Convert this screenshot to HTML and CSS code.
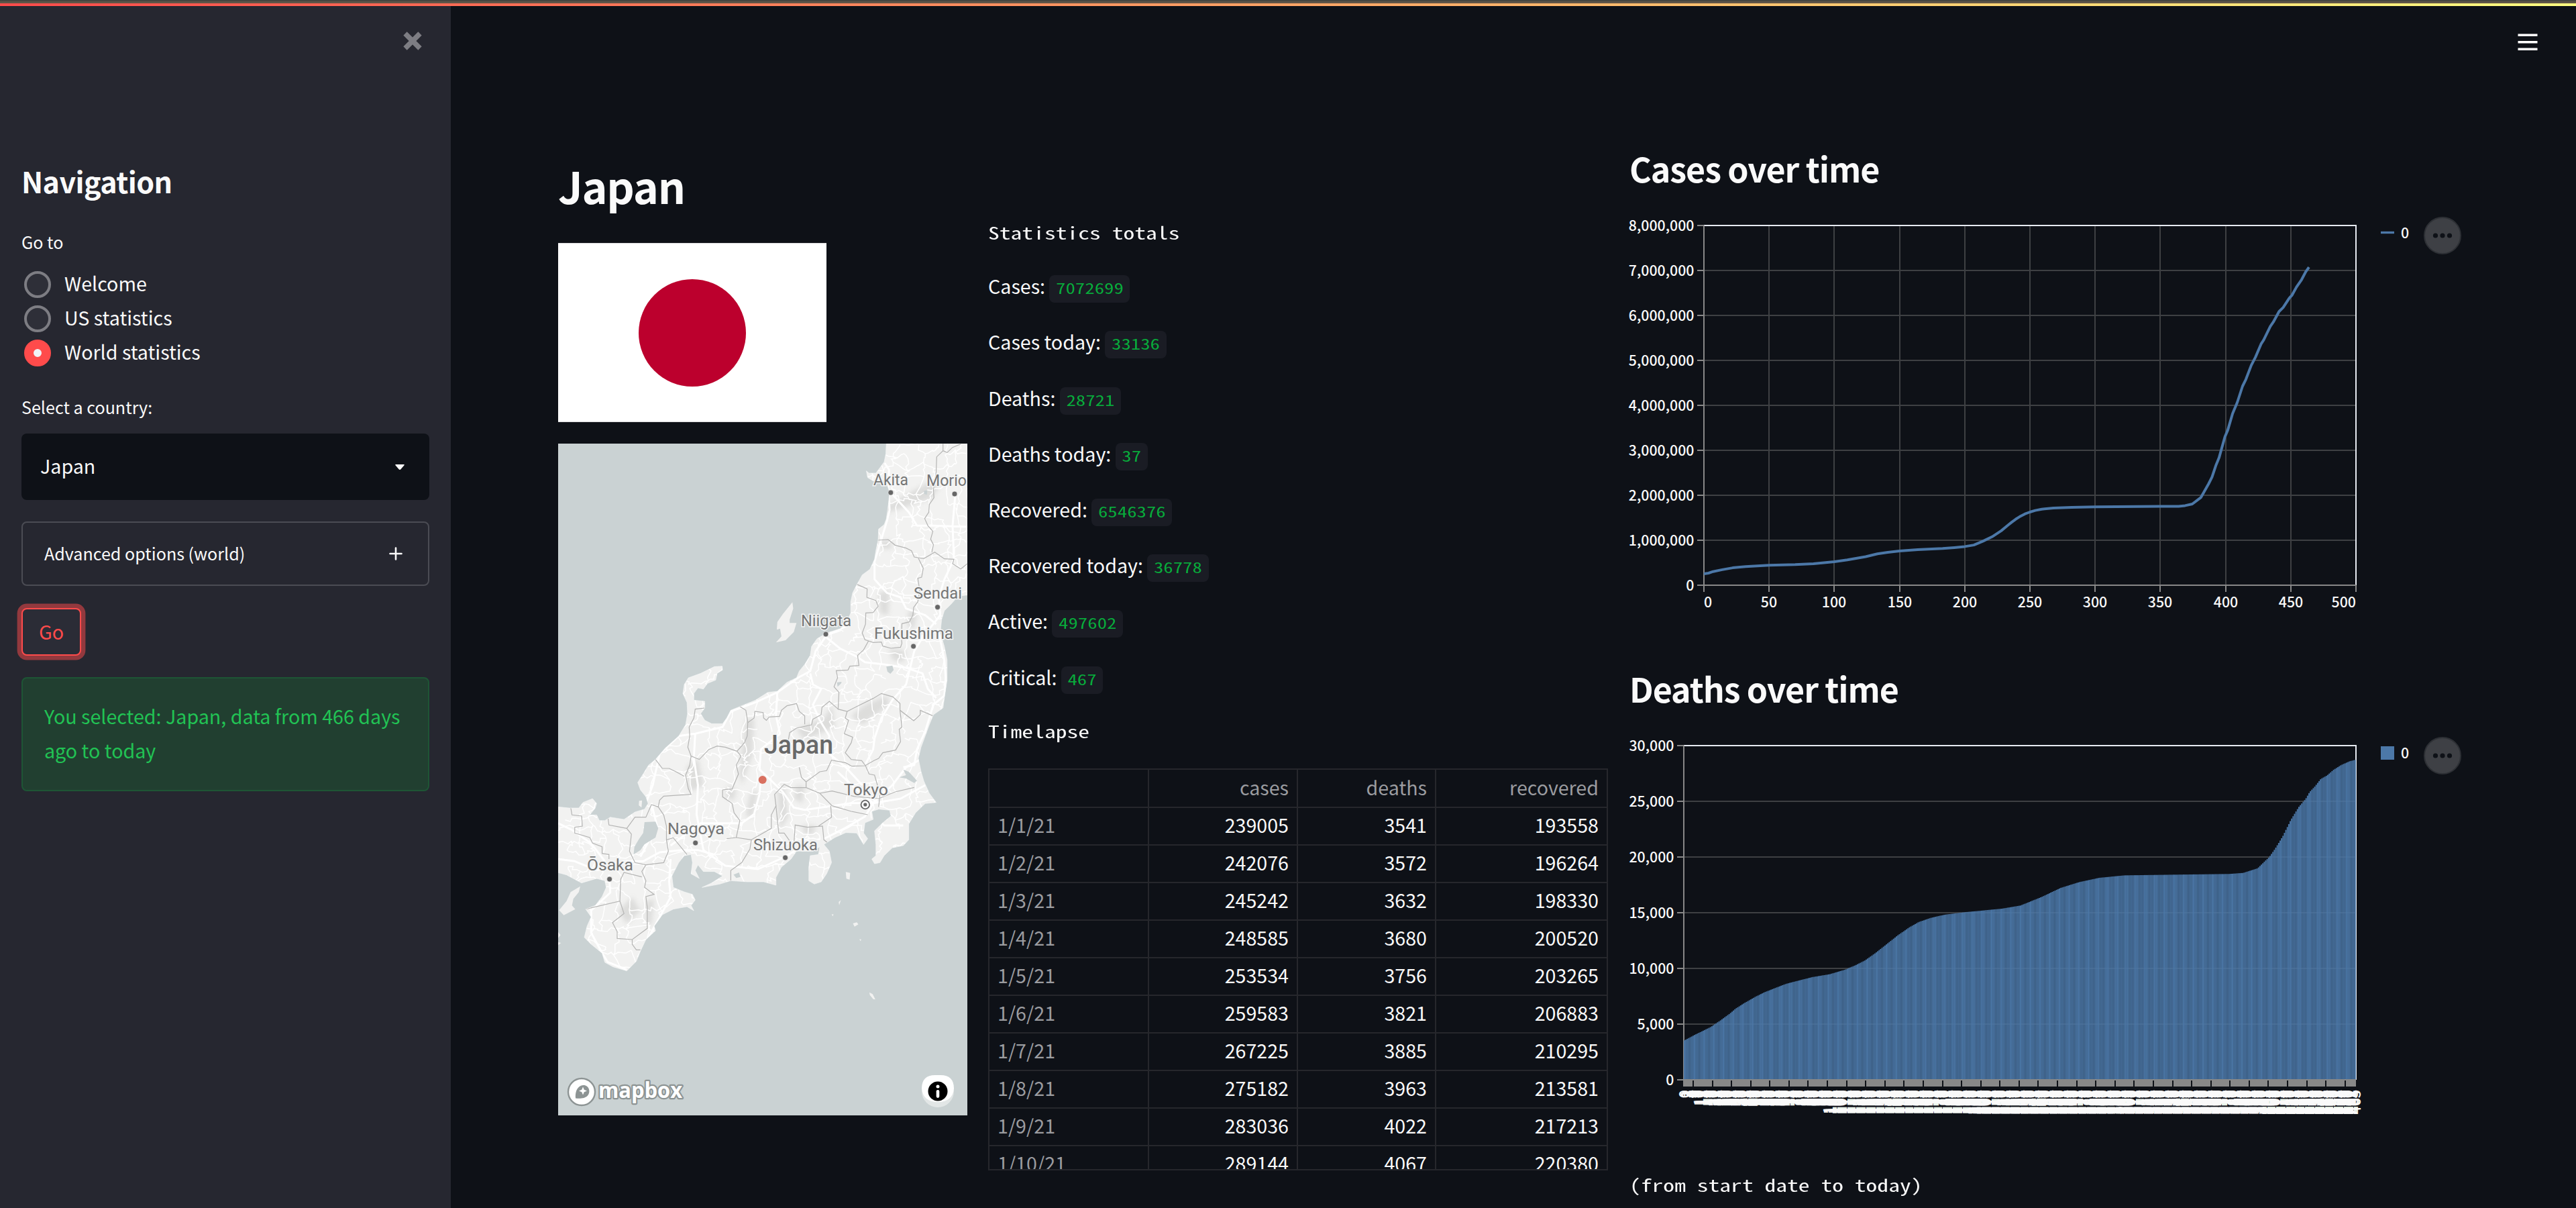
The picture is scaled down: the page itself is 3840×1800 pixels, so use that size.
FILE: index.html
```html
<!DOCTYPE html>
<html lang="en">
<head>
<meta charset="utf-8">
<title>Covid statistics</title>
<link rel="stylesheet" href="styles.css">
</head>
<body>
<div class="app">
  <div class="decoration"></div>
  <aside class="sidebar">
    <div class="sidebar-head">
      <svg class="close" width="28" height="28" viewBox="0 0 28 28"><path d="M3 3 25 25M25 3 3 25" stroke="#7d7d83" stroke-width="7.5"/></svg>
    </div>
    <h2 class="nav-title">Navigation</h2>
    <div class="label goto">Go to</div>
    <div class="radios">
      <label class="radio"><span class="dot"></span><span class="radio-text">Welcome</span></label>
      <label class="radio"><span class="dot"></span><span class="radio-text">US statistics</span></label>
      <label class="radio"><span class="dot checked"></span><span class="radio-text">World statistics</span></label>
    </div>
    <div class="label country">Select a country:</div>
    <div class="select"><span>Japan</span><svg width="14" height="8" viewBox="0 0 14 8"><path d="M1.2 0H12.8Q14.6 0 13.3 1.5L8.4 7.2Q7 8.6 5.6 7.2L.7 1.5Q-.6 0 1.2 0Z" fill="#fafafa"/></svg></div>
    <div class="expander"><span>Advanced options (world)</span><svg width="20" height="20" viewBox="0 0 20 20"><path d="M10 1.5V18.5M1.5 10H18.5" stroke="#fafafa" stroke-width="2.6" stroke-linecap="round"/></svg></div>
    <button class="go">Go</button>
    <div class="alert">You selected: Japan, data from 466 days ago to today</div>
  </aside>
  <main class="main">
    <div class="toolbar">
      <svg width="30" height="26" viewBox="0 0 30 26"><path d="M.5 2.2H29.5M.5 12.8H29.5M.5 23.2H29.5" stroke="#fff" stroke-width="3.6"/></svg>
    </div>
    <div class="columns">
      <section class="col-map">
        <h1>Japan</h1>
        <div class="flag"><div class="sun"></div></div>
        <svg class="map" width="610" height="1001" viewBox="0 0 610 1001">
          <defs>
            <path id="honshu" d="M1228 33 1226 80 1220 115 1205 140 1190 165 1165 165 1155 155 1160 185 1180 200 1215 195 1232 220 1240 250 1236 300 1228 370 1220 395 1200 415 1198 465 1190 510 1185 550 1168 595 1140 620 1122 660 1105 700 1098 740 1098 790 1080 840 1060 860 1010 880 975 905 955 940 950 980 930 1020 910 1050 900 1080 865 1100 830 1140 795 1145 750 1180 690 1210 660 1225 645 1260 630 1285 590 1285 565 1270 550 1240 565 1215 565 1185 525 1180 525 1150 540 1125 560 1130 575 1105 605 1090 610 1060 630 1045 628 1028 600 1030 550 1060 505 1080 490 1110 485 1150 500 1190 502 1240 495 1290 470 1340 420 1395 385 1445 360 1470 340 1510 320 1548 330 1581 350 1612 358 1642 345 1667 310 1680 270 1713 220 1703 200 1718 180 1718 170 1693 145 1693 165 1662 170 1642 155 1620 120 1637 105 1662 70 1662 29 1657 29 1951 60 1961 115 1997 170 1977 200 1987 205 2017 190 2058 165 2098 130 2114 150 2149 135 2190 125 2240 150 2271 190 2311 200 2352 230 2372 280 2390 315 2347 330 2301 350 2250 385 2210 380 2190 410 2139 450 2114 500 2103 525 2121 515 2098 530 2073 520 2048 490 2037 450 2017 445 1966 470 1906 490 1875 515 1870 520 1906 515 1956 545 1977 530 1941 540 1916 560 1946 600 1946 630 1966 590 1997 555 2017 620 2002 660 1987 720 1992 780 1992 825 2007 825 1972 845 1926 880 1890 900 1855 960 1855 985 1835 980 1870 950 1875 945 1926 945 1987 965 2002 990 1992 1010 1956 1028 1906 1020 1855 1000 1825 1040 1794 1080 1772 1120 1774 1145 1825 1160 1799 1145 1774 1150 1728 1180 1713 1175 1677 1200 1667 1240 1672 1245 1698 1215 1728 1185 1764 1190 1825 1190 1875 1175 1890 1185 1911 1205 1906 1220 1875 1250 1840 1290 1830 1310 1804 1310 1733 1335 1683 1370 1642 1410 1637 1385 1596 1365 1541 1355 1500 1345 1440 1355 1390 1370 1340 1385 1290 1400 1245 1435 1215 1440 1170 1450 1090 1450 1000 1440 940 1425 880 1430 820 1440 780 1465 750 1490 715 1524 710 1524 33Z"/>
            <clipPath id="land-clip"><use href="#honshu"/></clipPath>
            <filter id="soft" x="-30%" y="-30%" width="160%" height="160%"><feGaussianBlur stdDeviation="9"/></filter>
          </defs>
          <rect width="610" height="1001" fill="#cad2d3"/>
          <g transform="scale(.40816 .33333) translate(-29.4 -33)">
            <use href="#honshu" fill="#f2f2f1"/>
            <g clip-path="url(#land-clip)">
              <g filter="url(#soft)" fill="#cfcfcd" opacity=".6">
                <path d="M715 1270 745 1260 740 1420 700 1560 690 1500Z"/><path d="M830 1590 855 1560 870 1700 840 1760Z"/>
                <path d="M900 1560 930 1570 920 1640 890 1620Z"/><path d="M1200 470 1240 465 1250 500 1215 505Z"/>
                <path d="M1200 700 1240 690 1235 800 1205 790Z"/><path d="M1240 950 1300 960 1290 1010 1250 1000Z"/>
                <path d="M1100 1250 1150 1200 1230 1160 1240 1200 1140 1290Z"/><path d="M900 1310 1000 1260 1030 1200 1040 1300 930 1360Z"/>
                <path d="M500 1480 540 1440 560 1560 510 1590Z"/><path d="M730 1600 760 1580 740 1700 715 1700Z"/>
                <path d="M650 1560 680 1580 670 1630 640 1610Z"/><path d="M350 2080 380 2070 370 2180 350 2190Z"/>
                <path d="M920 1740 970 1740 960 1780 930 1780Z"/><path d="M1130 380 1390 200 1420 230 1390 280Z"/>
                <path d="M1310 780 1340 780 1330 860 1305 850Z"/><path d="M250 2120 300 2060 330 2120 280 2180Z"/>
              </g>
              <g id="roads" class="roads"></g>
              <g class="highways">
                <path d="M1222 120 1238 150 1235 240 1265 280 1310 340 1340 400 1400 400 1524 405M1480 260 1470 400 1475 550 1440 640 1420 720 1425 800 1360 900 1330 960 1310 1060 1300 1110 1250 1180 1210 1260 1185 1350 1180 1400 1150 1470"/>
                <path d="M1236 250 1240 330 1230 380 1200 500 1185 560 1185 640 1230 700 1280 720 1300 770 1370 800 1410 840M1420 880 1440 1000 1445 1080 1440 1160 1400 1200 1370 1320 1340 1400 1330 1470 1290 1480"/>
                <path d="M1098 840 1010 890 970 960 950 1050 905 1080 830 1145 750 1190 660 1230 630 1300 530 1330 470 1340 400 1420 375 1560 350 1640"/>
                <path d="M1010 900 1060 950 1120 985 1150 1010 1220 1020 1300 1035 1360 1060 1380 1130 1410 1170M950 1060 960 1110 990 1130 960 1200 985 1270 1020 1340 1010 1410 1080 1480 1140 1560"/>
                <path d="M830 1145 825 1250 840 1330 770 1400 765 1490 800 1530 850 1590 890 1660 930 1670 1100 1640 1180 1640M770 1520 765 1600 745 1690 700 1730 550 1730 440 1830"/>
                <path d="M530 1330 525 1440 540 1560 535 1690 560 1850 640 1920 760 1935 840 1890 900 1850M1000 1800 1080 1750 1150 1700 1180 1640 1280 1620 1370 1560M1180 1690 1220 1740 1290 1740"/>
                <path d="M29 1890 90 1900 170 1940 220 1930 270 1900 340 1900 400 1860 480 1850 540 1850 600 1870M440 1890 435 1990 440 2060 400 2150 320 2330M215 1960 220 2040 150 2120 150 2220 190 2310 210 2350 280 2385M29 1730 80 1760 150 1820 200 1900"/>
                <path d="M1180 1640 1250 1560 1300 1480 1360 1440M1180 1640 1120 1580 1050 1500M370 1640 390 1740 330 1880"/>
              </g>
              <g class="borders">
                <path d="M1435 33 1435 65 1412 92 1410 160 1400 240 1402 275 1385 305 1383 340 1368 368 1380 400 1398 425 1390 460 1400 485 1394 520M1500 35 1470 50 1450 73 1435 65"/>
                <path d="M1193 465 1235 462 1260 487 1300 500 1320 512 1330 540 1365 547 1405 518 1440 548 1475 550 1470 570 1500 593 1524 570"/>
                <path d="M1345 545 1363 590 1357 630 1343 635 1350 690 1343 740 1328 765 1325 800 1312 830 1285 838 1283 905"/>
                <path d="M1120 662 1158 682 1157 720 1190 735 1198 760 1180 788 1153 790 1152 840 1140 880 1150 910 1180 922 1210 920 1215 938 1245 948 1280 943 1285 925 1283 905"/>
                <path d="M1163 915 1145 955 1123 980 1128 1025 1095 1028 1088 1045 1045 1048 1050 1080 1037 1120 1055 1145 1052 1220 1085 1230 1120 1208 1180 1172 1210 1150 1252 1165 1278 1195 1278 1225 1328 1272 1352 1245 1352 1225 1398 1250"/>
                <path d="M1278 1225 1285 1300 1275 1310 1280 1365 1262 1403 1215 1415 1200 1440 1183 1450 1150 1473 1102 1475 1080 1460 1028 1448 1010 1495 985 1500 935 1545 918 1525 910 1480"/>
                <path d="M1085 1230 1078 1260 1090 1270 1075 1330 1105 1345 1100 1370 1078 1415 1100 1445 1138 1450 1152 1473 1165 1510 1185 1515 1205 1600 1200 1657"/>
                <path d="M1052 1220 1020 1185 993 1212 990 1245 960 1265 955 1290 900 1305 875 1325 870 1360"/>
                <path d="M693 1208 715 1225 722 1280 745 1260 748 1230 778 1235 780 1260 790 1270 800 1255 838 1252 845 1225 865 1205 900 1195 910 1230 930 1250 930 1288"/>
                <path d="M722 1280 720 1340 710 1370 683 1408 697 1430 680 1470 688 1510 665 1576 630 1581 630 1612 665 1642 672 1683 693 1718 680 1794 645 1799"/>
                <path d="M565 1215 530 1220 525 1260 508 1300 510 1340 503 1390 515 1430 545 1445 580 1400 610 1385 640 1390 683 1408"/>
                <path d="M515 1430 510 1470 495 1515 505 1576 515 1601 415 1609 400 1627 395 1657 415 1693 425 1743 425 1804 432 1855 415 1906 350 1916M385 1445 410 1485 435 1485 460 1500 490 1520"/>
                <path d="M935 1545 935 1571 985 1596 1030 1652 1100 1677 1160 1692M985 1596 1030 1586 1110 1610 1200 1620 1260 1590 1330 1570M935 1571 880 1571 855 1556 820 1601 825 1652 808 1693 808 1753 735 1804 730 1845 700 1906 660 1941 660 1987"/>
                <path d="M825 1652 835 1774 855 1774 890 1835 895 1738 940 1748 995 1743 1000 1804 1025 1829M1025 1652 1028 1703 980 1743M680 1794 735 1804"/>
                <path d="M75 1657 80 1693 115 1698 118 1743 90 1748 90 1774 145 1794 155 1819 190 1835 190 1865 215 1870 215 1890M210 1693 215 1738 280 1753 297 1779 290 1855 310 1906 350 1916 335 1946 350 1987 345 2017 380 2048 350 2058 355 2108 355 2200 300 2250 245 2245 245 2215 228 2174 270 2134 255 2078 130 2114"/>
                <path d="M300 2250 300 2271 315 2296 330 2296M280 1753 310 1703 350 1703 370 1647 395 1657M425 1804 450 1795 500 1870M255 2078 258 1980 270 1950 335 1970"/>
              </g>
              <g fill="#cad2d3">
                <path d="M345 1725 385 1723 395 1753 385 1794 345 1824 330 1850 305 1870 308 1835 325 1800 340 1774Z"/>
                <path d="M1228 1030 1250 1025 1255 1045 1243 1062 1232 1052Z"/><path d="M1365 245 1378 240 1376 262 1366 258Z"/>
                <path d="M1290 1490 1310 1500 1340 1540 1330 1550 1300 1530 1275 1525 1300 1515Z"/><path d="M1048 1100 1065 1098 1062 1106 1050 1120Z"/>
                <path d="M670 1960 690 1950 695 1970 680 1975Z"/>
              </g>
            </g>
            <use href="#honshu" class="coast"/>
            <g fill="#f2f2f1">
              <path d="M885 742 888 770 875 820 875 835 900 835 890 875 860 912 825 922 845 895 840 860 828 865 830 830 850 795Z"/>
              <path d="M110 2012 105 2038 85 2068 80 2098 92 2114 50 2141 33 2119 60 2078 75 2038Z"/>
              <path d="M1080 1948 1096 1952 1094 1982 1082 1978ZM1062 2074 1056 2096 1054 2082ZM1028 2138 1035 2136 1033 2146ZM1106 2178 1120 2173 1126 2182 1112 2192ZM1130 2248 1137 2250 1133 2257ZM1166 2486 1178 2494 1188 2518 1180 2516 1168 2498ZM29 2216 38 2230 29 2244ZM29 2262 40 2265 29 2275ZM325 1630 336 1628 334 1660 324 1650Z"/>
            </g>
          </g>
          <g class="city-dots">
            <circle cx="495.8" cy="73" r="4"/><circle cx="591" cy="75" r="4"/><circle cx="565.6" cy="243.7" r="4"/><circle cx="399" cy="284" r="4"/>
            <circle cx="529.6" cy="302" r="4"/><circle cx="204.7" cy="595" r="4"/><circle cx="338.6" cy="617" r="4"/><circle cx="76.6" cy="649" r="4"/>
            <circle cx="457.8" cy="538" r="6.3" class="ring"/><circle cx="457.8" cy="538" r="3"/>
          </g>
          <circle cx="304.7" cy="501" r="6" fill="#d9705f"/>
          <g class="city-names">
            <text x="470" y="62" textLength="52" lengthAdjust="spacingAndGlyphs">Akita</text>
            <text x="549" y="63" textLength="60" lengthAdjust="spacingAndGlyphs">Morio</text>
            <text x="530" y="231" textLength="72" lengthAdjust="spacingAndGlyphs">Sendai</text>
            <text x="362" y="272" textLength="75" lengthAdjust="spacingAndGlyphs">Niigata</text>
            <text x="471" y="291" textLength="118" lengthAdjust="spacingAndGlyphs">Fukushima</text>
            <text x="307" y="462" textLength="103" lengthAdjust="spacingAndGlyphs" class="country-name">Japan</text>
            <text x="426" y="524" textLength="66" lengthAdjust="spacingAndGlyphs">Tokyo</text>
            <text x="163" y="582" textLength="85" lengthAdjust="spacingAndGlyphs">Nagoya</text>
            <text x="291" y="606" textLength="96" lengthAdjust="spacingAndGlyphs">Shizuoka</text>
            <text x="43" y="636" textLength="69" lengthAdjust="spacingAndGlyphs">Ōsaka</text>
          </g>
          <g>
            <circle cx="35" cy="966" r="20" fill="#fff" stroke="#8d9494" stroke-width="2.4"/>
            <path d="M26 975.5C25 960 33 956 38 956C46 956 49 966 44 971.5C40 976 33 976 26 975.5Z" fill="#8d9494"/>
            <path d="M37 958.5 38.8 962.7 43 964.5 38.8 966.3 37 970.5 35.2 966.3 31 964.5 35.2 962.7Z" fill="#fff"/>
            <text x="60" y="975" textLength="125" lengthAdjust="spacingAndGlyphs" class="wordmark">mapbox</text>
          </g>
          <g>
            <rect x="542" y="941" width="48" height="48" rx="24" fill="#e2e6e6"/>
            <path d="M542 961Q542 941 562 941H570Q590 941 590 961Q588 981 566 981Q544 981 542 961Z" fill="#fff"/>
            <circle cx="566" cy="965" r="14.5"/><circle cx="566" cy="958" r="2.5" fill="#fff"/>
            <path d="M566 965.2V972.6" stroke="#fff" stroke-width="4.6" stroke-linecap="round"/>
          </g>
        </svg>
      </section>
      <section class="col-stats">
        <div class="mono">Statistics totals</div>
        <div class="totals">
          <p>Cases: <code><span>7072699</span></code></p>
          <p>Cases today: <code><span>33136</span></code></p>
          <p>Deaths: <code><span>28721</span></code></p>
          <p>Deaths today: <code><span>37</span></code></p>
          <p>Recovered: <code><span>6546376</span></code></p>
          <p>Recovered today: <code><span>36778</span></code></p>
          <p>Active: <code><span>497602</span></code></p>
          <p>Critical: <code><span>467</span></code></p>
        </div>
        <div class="mono">Timelapse</div>
        <div class="table-box">
          <table>
            <colgroup><col class="c1"><col class="c2"><col class="c3"><col class="c4"></colgroup>
            <tr><th></th><th>cases</th><th>deaths</th><th>recovered</th></tr>
            <tr><th>1/1/21</th><td>239005</td><td>3541</td><td>193558</td></tr>
            <tr><th>1/2/21</th><td>242076</td><td>3572</td><td>196264</td></tr>
            <tr><th>1/3/21</th><td>245242</td><td>3632</td><td>198330</td></tr>
            <tr><th>1/4/21</th><td>248585</td><td>3680</td><td>200520</td></tr>
            <tr><th>1/5/21</th><td>253534</td><td>3756</td><td>203265</td></tr>
            <tr><th>1/6/21</th><td>259583</td><td>3821</td><td>206883</td></tr>
            <tr><th>1/7/21</th><td>267225</td><td>3885</td><td>210295</td></tr>
            <tr><th>1/8/21</th><td>275182</td><td>3963</td><td>213581</td></tr>
            <tr><th>1/9/21</th><td>283036</td><td>4022</td><td>217213</td></tr>
            <tr><th>1/10/21</th><td>289144</td><td>4067</td><td>220380</td></tr>
          </table>
        </div>
      </section>
      <section class="col-charts">
        <h2>Cases over time</h2>
        <svg id="cases" class="chart" width="1271" height="630" viewBox="0 0 1271 630"></svg>
        <h2 class="second">Deaths over time</h2>
        <svg id="deaths" class="chart" width="1271" height="610" viewBox="0 0 1271 610"></svg>
        <div class="mono caption">(from start date to today)</div>
      </section>
    </div>
  </main>
</div>
<script src="charts.js"></script>
</body>
</html>
```
FILE: styles.css
```css
* { box-sizing: border-box; }
body {
  margin: 0;
  background: #0e1117;
  color: #fafafa;
  font-family: "Noto Sans CJK JP", "Noto Sans", sans-serif;
  font-size: 28.65px;
}
h1, h2, p { margin: 0; font-weight: 700; }
p { font-weight: 400; }
svg { display: block; flex: none; }
.app { position: relative; display: flex; width: 3840px; height: 1800px; overflow: hidden; }
.decoration {
  position: absolute;
  inset: 0 0 auto 0;
  height: 9px;
  background:
    linear-gradient(#454640 0 2px, #5f5548 2px 5px, transparent 5px),
    linear-gradient(90deg, #ff4b4b, #fffd80);
}

.sidebar { width: 672px; flex: none; background: #262730; padding: 0 32px; display: flex; flex-direction: column; }
.sidebar-head { height: 240px; display: flex; justify-content: flex-end; padding: 47px 11px 0 0; }
.nav-title { font-size: 43px; line-height: 58px; letter-spacing: -.6px; }
.label { font-size: 25.1px; line-height: 42px; }
.goto { margin-top: 41px; }
.radios { margin-top: 17px; }
.radio { display: flex; align-items: center; gap: 20px; height: 51px; padding-left: 4px; }
.radio-text { line-height: 46px; padding-bottom: 3px; }
.dot { width: 40px; height: 40px; border-radius: 50%; border: 4px solid #7d7d83; background: #2e2f38; }
.dot.checked { border: 14px solid #ff4b4b; background: #f0f2f6; }
.country { margin-top: 34px; }
.select, .expander { display: flex; align-items: center; justify-content: space-between; border-radius: 8px; }
.select { margin-top: 19px; height: 99px; padding: 0 37px 0 28px; background: #0e1117; }
.select span { padding-bottom: 4px; }
.expander span { padding-bottom: 2px; }
.expander { margin-top: 32px; height: 96px; padding: 0 38px 0 32px; border: 2px solid #4b4c54; font-size: 25.1px; }
.go {
  margin-top: 33px; width: 89px; height: 71px; padding: 0 0 3px;
  background: #2b2c36; border: 2px solid #ff4b4b; border-radius: 8px;
  box-shadow: 0 0 0 6.4px rgba(255, 75, 75, .5);
  color: #ff4b4b; font: inherit;
}
.alert {
  margin-top: 32px; height: 170px; padding: 30px 30px 0 32px;
  background: #213f30; border: 2px solid #1e5535; border-radius: 8px;
  color: #21c354; line-height: 51.2px;
}

.main { flex: 1; padding-left: 160px; }
.toolbar { height: 216px; display: flex; justify-content: flex-end; padding: 50px 57px 0 0; }
.columns { display: grid; grid-template-columns: 610px 924px 1272px; column-gap: 31px; align-items: start; }

.col-map { padding-top: 17px; }
h1 { font-size: 64.5px; line-height: 86px; letter-spacing: -1.2px; }
.flag {
  width: 400px; height: 267px; margin: 43px 0 32px;
  display: flex; align-items: center; justify-content: center;
  background: #fff; border: solid #dcdcde; border-width: 1px 0;
}
.sun { width: 160px; height: 160px; border-radius: 50%; background: #bc002d; }
.roads path { fill: none; stroke: #fff; stroke-width: 1.5px; vector-effect: non-scaling-stroke; }
.highways path { fill: none; stroke: #fff; stroke-width: 3px; stroke-linejoin: round; vector-effect: non-scaling-stroke; }
.borders path { fill: none; stroke: #b5b5b4; stroke-width: 1.2px; vector-effect: non-scaling-stroke; }
.coast { fill: none; stroke: #f8f9f9; stroke-width: 1.5px; vector-effect: non-scaling-stroke; }
.city-dots circle { fill: #666; stroke: #fff; stroke-width: .6px; }
.city-dots .ring { fill: #fff; stroke: #666; stroke-width: 1.8px; }
.city-names text {
  font: 24.5px Roboto, sans-serif; fill: #757575;
  stroke: #f4f5f5; stroke-width: 3px; paint-order: stroke;
}
.city-names .country-name { font-size: 38px; fill: #686868; font-weight: 500; }
.wordmark {
  font: 700 32px "Open Sans", sans-serif; fill: #fff;
  stroke: #8d9494; stroke-width: 4.5px; stroke-linejoin: round; paint-order: stroke;
}

.col-stats { padding-top: 101px; }
.mono {
  font-family: "Noto Sans Mono CJK JP", "Liberation Mono", monospace; font-size: 33.6px; line-height: 51.2px;
  transform: scaleY(.77); transform-origin: 0 40px;
}
.totals { margin: 32px 0 26px; display: flex; flex-direction: column; gap: 32px; }
.totals p { line-height: 51.2px; height: 51.2px; }
code {
  display: inline-block; height: 41px; padding: 0 9.6px; border-radius: 8px;
  background: #1a1c24; color: #09ab3b;
  font: 28.8px/32.5px "Noto Sans Mono CJK JP", "Liberation Mono", monospace;
}
code span { display: inline-block; transform: scaleY(.77); transform-origin: 0 28.8px; }
.table-box { margin-top: 34px; height: 599px; overflow: hidden; border: 2px solid #26272c; }
table { width: 920px; table-layout: fixed; border-collapse: collapse; }
.c1 { width: 237px; }
.c2 { width: 222px; }
.c3 { width: 206px; }
th, td {
  height: 56px; padding: 0 12px 3px 12px; line-height: 50px; font-weight: 400; text-align: right; white-space: nowrap;
  border-right: 2px solid #26272c; border-bottom: 2px solid #26272c;
}
th { color: #9b9ca0; }
th:first-child { text-align: left; }
th:last-child, td:last-child { border-right: 0; }

.col-charts { padding-left: 1px; }
.col-charts h2 { font-size: 50.1px; line-height: 68px; letter-spacing: -1.05px; }
.chart { margin-top: 16px; overflow: visible; }
.col-charts .second { margin-top: 61px; }
#deaths { margin-top: 21px; }
.caption { margin-top: 46px; }
.chart text { font: 500 21.3px "Noto Sans CJK JP", sans-serif; fill: #fafafa; }
```
FILE: charts.js
```js
const NS = 'http://www.w3.org/2000/svg';
function add(parent, tag, attrs, text) {
  const el = document.createElementNS(NS, tag);
  for (const k in attrs) el.setAttribute(k, attrs[k]);
  if (text !== undefined) el.textContent = text;
  parent.appendChild(el);
  return el;
}
const line = (p, x1, y1, x2, y2, stroke, w = 2) =>
  add(p, 'line', { x1, y1, x2, y2, stroke, 'stroke-width': w });
const comma = n => n.toLocaleString('en-US');

const cases = [[0,254],[3.5,268],[7,303],[14,345],[22,387],[32,415],[50,444],[70,458],[84,479],[100,521],[110,563],[124,634],[133,697],[141,732],[150,761],[164,789],[183,817],[192,838],[200,859],[207,894],[214,979],[221,1077],[228,1211],[233,1331],[236,1401],[239,1465],[242,1521],[246,1584],[250,1627],[254,1662],[259,1690],[268,1718],[282,1732],[300,1743],[349,1752],[364,1754],[369,1770],[374.5,1806],[381,1949],[387,2253],[389.6,2405],[392.5,2655],[395,2834],[399.5,3299],[401.7,3450],[405.4,3817],[409,4067],[413,4425],[415.6,4577],[419.7,4890],[422.9,5068],[427.2,5363],[429.2,5453],[434.3,5757],[436.7,5855],[441,6087],[444.2,6177],[448.8,6382],[450.8,6445],[454.4,6633],[458.3,6794],[461.5,6972],[464,7073]];
const deaths = [[0,3541],[6.6,3998],[13,4407],[18.4,4753],[24.8,5320],[31.2,5918],[35.5,6390],[40.8,6831],[49.3,7460],[55.7,7870],[64.3,8310],[70.7,8625],[79.2,8909],[88.8,9223],[100.6,9475],[111.3,9884],[118.7,10294],[125,10703],[132.6,11396],[139,12057],[147.6,12938],[156,13694],[162.5,14166],[171,14544],[180.6,14827],[194.5,15047],[220,15362],[233,15646],[248,16433],[260.7,17220],[273.5,17740],[287.6,18132],[305,18352],[340,18415],[377.6,18478],[387.4,18573],[397.3,18982],[405.4,19990],[409.4,20714],[414.9,21879],[420.4,23327],[425.9,24491],[430.7,25215],[433.5,25845],[436.8,26286],[441.2,27010],[445.6,27325],[450,27828],[455.5,28269],[461,28584],[465,28721]];
function at(series, day) {
  for (let i = 1; i < series.length; i++) {
    const [a, va] = series[i - 1], [b, vb] = series[i];
    if (day <= b) return va + (vb - va) * (day - a) / (b - a);
  }
}

function menu(svg, cx, cy) {
  add(svg, 'circle', { cx, cy, r: 27, fill: '#3e4045', stroke: '#2d3035', 'stroke-width': 2 });
  for (const d of [-10.5, 0, 10.5]) add(svg, 'circle', { cx: cx + d, cy, r: 3.6, fill: '#0e1117' });
}
function yAxis(svg, left, right, top, bottom, max, step) {
  for (let v = 0; v <= max; v += step) {
    const y = bottom - (bottom - top) * v / max;
    if (v > 0 && v < max) line(svg, left, Math.round(y), right, Math.round(y), '#3e4043');
    line(svg, left - 10, Math.round(y), left, Math.round(y), '#888');
    add(svg, 'text', { x: left - 14.5, y: y + 8, 'text-anchor': 'end' }, comma(v));
  }
}
function frame(svg, left, right, top, bottom) {
  line(svg, left, top, right, top, '#e6eaf1');
  line(svg, right, top - 1, right, bottom, '#e6eaf1');
}

{
  const svg = document.getElementById('cases');
  const L = 111, R = 1083, T = 36, B = 572;
  yAxis(svg, L, R, T, B, 8000000, 1000000);
  for (let d = 0; d <= 500; d += 50) {
    const x = Math.round(L + (R - L) * d / 500);
    if (d > 0 && d < 500) line(svg, x, T, x, B, '#3e4043');
    line(svg, x, B, x, B + 10, '#888');
    add(svg, 'text', { x, y: B + 32.5, 'text-anchor': d === 0 ? 'start' : d === 500 ? 'end' : 'middle' }, d);
  }
  frame(svg, L, R, T, B);
  line(svg, L, T, L, B + 1, '#888');
  line(svg, L, B, R, B, '#888');
  const pts = cases.map(([d, v]) => (L + (R - L) * d / 500).toFixed(1) + ',' + (B - (B - T) * v / 8000).toFixed(1));
  add(svg, 'polyline', { points: pts.join(' '), fill: 'none', stroke: '#4c78a8', 'stroke-width': 4, 'stroke-linejoin': 'round' });
  line(svg, 1120, 46.5, 1140, 46.5, '#4c78a8', 3.4);
  add(svg, 'text', { x: 1150, y: 55 }, 0);
  menu(svg, 1212, 51);
}
{
  const svg = document.getElementById('deaths');
  const L = 81, R = 1083, T = 31, B = 529, n = 466, step = (R - L) / n;
  yAxis(svg, L, R, T, B, 30000, 5000);
  frame(svg, L, R, T, B);
  line(svg, L, T, L, B, '#888');
  for (let i = 0; i < n; i++) {
    const h = (B - T) * at(deaths, i) / 30000;
    add(svg, 'rect', { x: (L + i * step).toFixed(2), y: (B - h).toFixed(1), width: (step * .9).toFixed(2), height: h.toFixed(1), fill: '#4c78a8' });
  }
  add(svg, 'rect', { x: L - 1, y: B - 1, width: R - L + 1, height: 11, fill: '#888' });
  for (let x = 95; x < R; x += 28.58) line(svg, Math.round(x), B + 1, Math.round(x), B + 10, '#0e1117');
  for (let i = 0; i < n; i++) {
    const x = (L + (i + .5) * step).toFixed(2);
    add(svg, 'text', { transform: `translate(${x} ${B + 15}) rotate(-90)`, y: 8, 'text-anchor': 'end' }, i);
  }
  add(svg, 'rect', { x: 1120, y: 32, width: 20, height: 20, fill: '#4c78a8' });
  add(svg, 'text', { x: 1150, y: 49.5 }, 0);
  menu(svg, 1212, 46);
}

/* minor road network, seeded so that every load is identical */
{
  let seed = 11;
  const rnd = () => (seed = (seed * 16807) % 2147483647) / 2147483647;
  const g = document.getElementById('roads');
  const stepX = 46, stepY = 56, nodes = [];
  for (let r = 0; r * stepY < 2500; r++) {
    nodes.push([]);
    for (let c = 0; c * stepX < 1600; c++) nodes[r].push([c * stepX + rnd() * 36, r * stepY + rnd() * 44]);
  }
  const link = (a, b) => {
    const w = () => (rnd() - .5) * 18;
    let d = `M${a[0].toFixed(0)} ${a[1].toFixed(0)}`;
    for (const t of [.25, .5, .75]) d += `L${(a[0] + (b[0] - a[0]) * t + w()).toFixed(0)} ${(a[1] + (b[1] - a[1]) * t + w()).toFixed(0)}`;
    add(g, 'path', { d: d + `L${b[0].toFixed(0)} ${b[1].toFixed(0)}` });
  };
  for (let r = 0; r < nodes.length; r++) for (let c = 0; c < nodes[r].length; c++) {
    if (c && rnd() < .72) link(nodes[r][c - 1], nodes[r][c]);
    if (r && rnd() < .72) link(nodes[r - 1][c], nodes[r][c]);
  }
}
```
